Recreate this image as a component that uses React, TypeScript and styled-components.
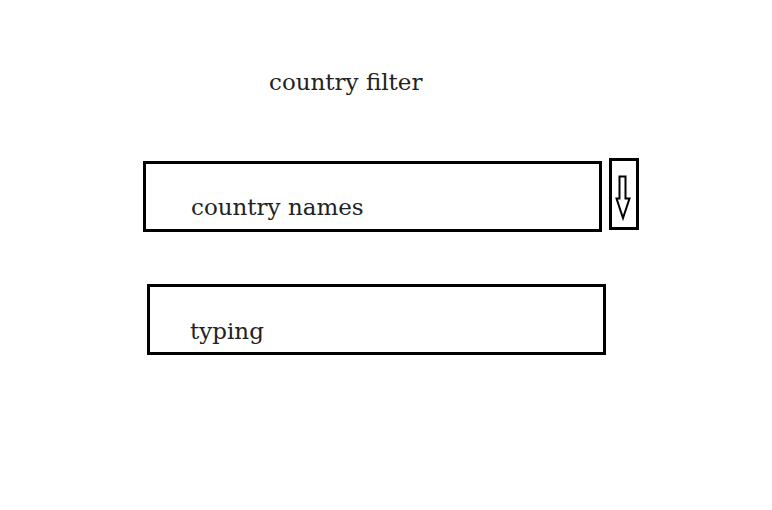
import { FC } from 'react'
import styled, { createGlobalStyle } from 'styled-components'

const GlobalStyle = createGlobalStyle`
  html, body {
    margin: 0;
    padding: 0;
    background: #ffffff;
  }
  body {
    font-family: 'DejaVu Serif', 'Liberation Serif', serif;
    color: #222222;
  }
`

const Page = styled.div`
  width: 772px;
  height: 510px;
  display: flex;
  flex-direction: column;
  padding-top: 66px;
  box-sizing: border-box;
`

const Title = styled.h1`
  margin: 0 0 0 269px;
  font-size: 23px;
  font-weight: normal;
  line-height: 32px;
`

const Row = styled.div<{ $left: number; $top: number }>`
  display: flex;
  align-items: flex-start;
  gap: 7px;
  margin-left: ${({ $left }) => $left}px;
  margin-top: ${({ $top }) => $top}px;
`

const Box = styled.div<{ $textLeft: number; $textTop: number }>`
  width: 459px;
  height: 71px;
  box-sizing: border-box;
  border: 3px solid #000;
  padding: ${({ $textTop }) => $textTop}px 0 0 ${({ $textLeft }) => $textLeft}px;
  font-size: 23px;
  line-height: 32px;
`

const ArrowButton = styled.div`
  width: 30px;
  height: 72px;
  box-sizing: border-box;
  border: 3px solid #000;
  margin-top: -3px;
  display: flex;
`

const DownArrow: FC = () => (
  <svg width="24" height="66" viewBox="0 0 24 66">
    <path
      d="M7.5 15.5 H13.5 V37.5 H17.5 L11 57 L4.5 37.5 H7.5 Z"
      fill="none"
      stroke="#000"
      strokeWidth="2"
      strokeLinejoin="miter"
    />
  </svg>
)

const App: FC = () => {
  return (
    <>
      <GlobalStyle />
      <Page>
        <Title>country filter</Title>
        <Row $left={143} $top={63}>
          <Box $textLeft={45} $textTop={27}>country names</Box>
          <ArrowButton>
            <DownArrow />
          </ArrowButton>
        </Row>
        <Row $left={147} $top={52}>
          <Box $textLeft={40} $textTop={28}>typing</Box>
        </Row>
      </Page>
    </>
  )
}

export default App
